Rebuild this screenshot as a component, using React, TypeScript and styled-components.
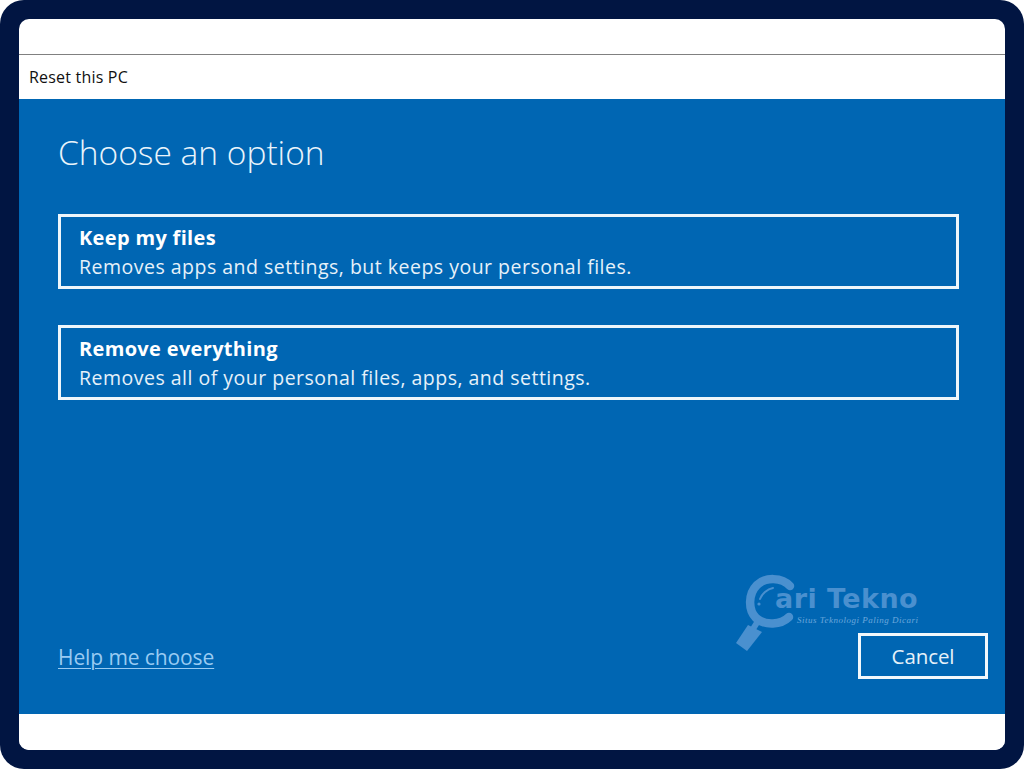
import styled, { createGlobalStyle } from "styled-components";

const GlobalStyle = createGlobalStyle`
  html, body {
    margin: 0;
    padding: 0;
    background: #ffffff;
    font-family: "Open Sans", "Noto Sans", sans-serif;
  }
`;

const Frame = styled.div`
  box-sizing: border-box;
  width: 1024px;
  height: 769px;
  padding: 19px;
  background: #011542;
  border-radius: 24px;
`;

const Window = styled.div`
  display: flex;
  flex-direction: column;
  height: 100%;
  overflow: hidden;
  background: #ffffff;
  border-radius: 10px;
`;

const TopStrip = styled.div`
  flex: none;
  height: 35px;
  border-bottom: 1px solid #808080;
`;

const TitleBar = styled.div`
  flex: none;
  box-sizing: border-box;
  height: 44px;
  padding: 12px 0 0 10px;
  font-size: 16px;
  line-height: 20px;
  letter-spacing: 0.2px;
  color: #111111;
`;

const Panel = styled.main`
  position: relative;
  flex: 1;
  display: flex;
  flex-direction: column;
  padding: 30px 17px 35px 39px;
  background: #0066b3;
  color: #ffffff;
`;

const Heading = styled.h1`
  margin: 0 0 39px;
  font-size: 33.5px;
  font-weight: 300;
  line-height: 46px;
  color: #eaf4fb;
`;

const OptionList = styled.div`
  display: flex;
  flex-direction: column;
  gap: 36px;
  width: 901px;
`;

const Option = styled.button`
  box-sizing: border-box;
  display: flex;
  flex-direction: column;
  height: 75px;
  padding: 7px 18px;
  border: 3px solid #eef6fb;
  background: transparent;
  color: #ffffff;
  font: inherit;
  text-align: left;
`;

const OptionTitle = styled.span`
  font-size: 20px;
  font-weight: 700;
  line-height: 27px;
  letter-spacing: 0.33px;
`;

const OptionText = styled.span`
  margin-top: 1px;
  font-size: 19.5px;
  line-height: 30px;
  letter-spacing: 0.49px;
  color: #e6f1f9;
`;

const Footer = styled.div`
  display: flex;
  align-items: center;
  justify-content: space-between;
  margin-top: auto;
`;

const HelpLink = styled.a`
  position: relative;
  top: 1px;
  font-size: 21px;
  line-height: 27px;
  letter-spacing: -0.1px;
  color: #99cbf2;
  text-decoration: underline;
  text-underline-offset: 3px;
  text-decoration-thickness: 1px;
`;

const CancelButton = styled.button`
  box-sizing: border-box;
  width: 130px;
  height: 46px;
  border: 3px solid #f2f8fc;
  background: transparent;
  color: #e6f1f9;
  font: inherit;
  font-size: 20.5px;
  letter-spacing: -0.1px;
`;

const Watermark = styled.div`
  position: absolute;
  left: 716px;
  top: 474px;
  width: 190px;
  height: 80px;
  color: #4a90cf;
`;

const LogoMark = styled.svg`
  position: absolute;
  left: 0;
  top: 0;
`;

const WatermarkName = styled.span`
  position: absolute;
  left: 40px;
  top: 13px;
  font-family: "DejaVu Sans", sans-serif;
  font-size: 27px;
  font-weight: 700;
  line-height: 26px;
  letter-spacing: 0.45px;
  white-space: nowrap;
`;

const WatermarkTagline = styled.span`
  position: absolute;
  left: 62px;
  top: 42px;
  font-family: "Liberation Serif", serif;
  font-size: 9px;
  font-style: italic;
  line-height: 11px;
  letter-spacing: 0.5px;
  color: #6ba6dc;
  white-space: nowrap;
`;

function MagnifierLogo() {
  return (
    <LogoMark width="70" height="80" viewBox="0 0 70 80" fill="none">
      <path d="M55 13 C47 4 30 4 22 12 C13 21 13 37 21 45 C30 53 46 52 54 44" stroke="currentColor" strokeWidth="8.5" strokeLinecap="round" />
      <path d="M38 15 C32 16 27 21 25 26" stroke="currentColor" strokeWidth="2" strokeLinecap="round" />
      <circle cx="24" cy="31" r="1.6" fill="currentColor" />
      <path d="M23 48 L18 56" stroke="currentColor" strokeWidth="6" />
      <path d="M13 52 L27 59 L12 78 L1 70 Z" fill="currentColor" />
    </LogoMark>
  );
}

export default function App() {
  return (
    <Frame>
      <GlobalStyle />
      <Window>
        <TopStrip />
        <TitleBar>Reset this PC</TitleBar>
        <Panel>
          <Heading>Choose an option</Heading>
          <OptionList>
            <Option>
              <OptionTitle>Keep my files</OptionTitle>
              <OptionText>Removes apps and settings, but keeps your personal files.</OptionText>
            </Option>
            <Option>
              <OptionTitle>Remove everything</OptionTitle>
              <OptionText>Removes all of your personal files, apps, and settings.</OptionText>
            </Option>
          </OptionList>
          <Watermark>
            <MagnifierLogo />
            <WatermarkName>ari Tekno</WatermarkName>
            <WatermarkTagline>Situs Teknologi Paling Dicari</WatermarkTagline>
          </Watermark>
          <Footer>
            <HelpLink>Help me choose</HelpLink>
            <CancelButton>Cancel</CancelButton>
          </Footer>
        </Panel>
        <BottomStrip />
      </Window>
    </Frame>
  );
}

const BottomStrip = styled.div`
  flex: none;
  height: 36px;
  background: #ffffff;
`;
